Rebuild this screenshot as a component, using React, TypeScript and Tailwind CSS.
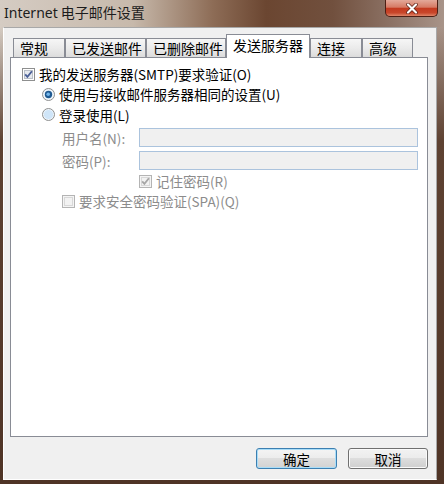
import React from 'react';

function CheckBox({ checked, disabled }: { checked?: boolean; disabled?: boolean }) {
  return (
    <svg width="13" height="13" viewBox="0 0 13 13" className="shrink-0">
      <rect x="0.5" y="0.5" width="12" height="12" fill={disabled ? '#f4f4f4' : '#ffffff'} stroke={disabled ? '#b4b4b4' : '#8e8f8f'} />
      <rect x="2.5" y="2.5" width="8" height="8" fill={disabled ? '#f2f2f2' : '#e6e9ee'} stroke={disabled ? '#d8d8d8' : '#b9bfc7'} />
      {checked && (
        <path d="M3.2 6.3 L5.4 8.9 L9.9 3.2" fill="none" stroke={disabled ? '#a6a6a6' : '#4a5f97'} strokeWidth="1.8" />
      )}
    </svg>
  );
}

function Radio({ checked }: { checked?: boolean }) {
  return (
    <svg width="13" height="13" viewBox="0 0 13 13" className="shrink-0">
      <circle cx="6.5" cy="6.5" r="6" fill="#eef5fb" stroke="#8e8f8f" />
      {checked ? (
        <>
          <circle cx="6.5" cy="6.5" r="3.7" fill="#1f5a92" />
          <circle cx="6.2" cy="6.2" r="1.8" fill="#74b6ea" />
        </>
      ) : (
        <circle cx="6.5" cy="6.5" r="4.6" fill="#cfe5f8" />
      )}
    </svg>
  );
}

const tabs = [
  { label: '常规', w: 'w-[52px]' },
  { label: '已发送邮件', w: 'w-[81px]' },
  { label: '已删除邮件', w: 'w-[80px]' },
  { label: '发送服务器', w: 'w-[84px]', active: true },
  { label: '连接', w: 'w-[52px]' },
  { label: '高级', w: 'w-[51px]' },
];

export default function App() {
  return (
    <div className="w-[444px] h-[484px] flex flex-col overflow-hidden font-['Noto_Sans_CJK_SC',sans-serif] text-[13.5px] text-black">
      {/* Title bar */}
      <div className="h-[27px] flex items-start justify-between bg-[linear-gradient(90deg,#d5ccc3_0%,#c7b9ab_30%,#8d6c56_48%,#6b4631_60%,#71503e_75%,#8c7265_88%,#a89489_100%)]">
        <span className="pl-[4px] pt-[3px] text-[14px] leading-[18px] text-[#1c1c1c]">
          <span className="font-['Noto_Sans',sans-serif]">Internet</span> 电子邮件设置
        </span>
        <div className="mr-[6px] w-[53px] h-[17px] flex items-center justify-center rounded-b-[5px] border border-t-0 border-[#4d1f14] bg-[linear-gradient(180deg,#e3a999_0%,#d67a64_45%,#c33a1f_52%,#c8462a_80%,#e08568_100%)]">
          <svg width="14" height="11" viewBox="0 0 14 11">
            <path d="M3 1.5 L11 9.5 M11 1.5 L3 9.5" stroke="#5a1e12" strokeWidth="3.6" strokeLinecap="round" />
            <path d="M3 1.5 L11 9.5 M11 1.5 L3 9.5" stroke="#ffffff" strokeWidth="2.2" strokeLinecap="round" />
          </svg>
        </div>
      </div>

      {/* Frame + client area */}
      <div className="flex-1 flex pl-[3px] pr-[7px] pb-[4px] bg-[linear-gradient(180deg,rgba(0,0,0,0)_0%,#5e4232_25%,#4f3426_100%),linear-gradient(90deg,#d5ccc3_0%,#8d6c56_50%,#a89489_100%)]">
        <div className="flex-1 flex flex-col bg-[#f0f0f0] border border-t-[#a8a8a8] border-r-[#a8a8a8] border-l-white border-b-white pl-[6px] pr-[8px] pt-[6px]">
          {/* Tabs */}
          <div className="h-[23px] flex items-end pl-[3px]">
            {tabs.map((t) =>
              t.active ? (
                <div
                  key={t.label}
                  className={`${t.w} h-[24px] -mb-px relative z-10 bg-white border border-b-0 border-[#898c95] pl-[6px] pt-[1px] leading-[18px] text-[14px]`}
                >
                  {t.label}
                </div>
              ) : (
                <div
                  key={t.label}
                  className={`${t.w} h-[19px] border border-b-0 border-[#898c95] bg-[linear-gradient(180deg,#f6f6f6_0%,#ebebeb_50%,#dcdcdc_100%)] pl-[6px] leading-[18px] text-[14px]`}
                >
                  {t.label}
                </div>
              )
            )}
          </div>

          {/* Panel */}
          <div className="h-[380px] bg-white border border-[#898c95] pt-[6px] pl-[11px] flex flex-col leading-[16px]">
            <div className="h-[20px] flex items-center gap-[4px]">
              <CheckBox checked />
              <span>我的发送服务器(SMTP)要求验证(O)</span>
            </div>
            <div className="h-[20px] flex items-center gap-[4px] pl-[20px]">
              <Radio checked />
              <span>使用与接收邮件服务器相同的设置(U)</span>
            </div>
            <div className="h-[21px] flex items-center gap-[4px] pl-[20px]">
              <Radio />
              <span>登录使用(L)</span>
            </div>
            <div className="mt-[3px] h-[19px] flex items-center pl-[40px]">
              <span className="w-[77px] text-[#8c8c8c]">用户名(N):</span>
              <div className="w-[279px] h-[19px] bg-[#f0f0f0] border border-[#abc3dd]" />
            </div>
            <div className="mt-[4px] h-[19px] flex items-center pl-[40px]">
              <span className="w-[77px] text-[#8c8c8c]">密码(P):</span>
              <div className="w-[279px] h-[19px] bg-[#f0f0f0] border border-[#abc3dd]" />
            </div>
            <div className="mt-[1px] h-[20px] flex items-center gap-[4px] pl-[117px]">
              <CheckBox checked disabled />
              <span className="text-[#8c8c8c]">记住密码(R)</span>
            </div>
            <div className="h-[20px] flex items-center gap-[4px] pl-[40px]">
              <CheckBox disabled />
              <span className="text-[#8c8c8c]">要求安全密码验证(SPA)(Q)</span>
            </div>
          </div>

          {/* Buttons */}
          <div className="mt-[11px] flex justify-end gap-[11px]">
            <button className="w-[81px] h-[21px] rounded-[3px] border border-[#3c7fb1] shadow-[inset_0_0_0_1px_#a9ddf8] bg-[linear-gradient(180deg,#f4f4f4_0%,#ececec_49%,#dedede_50%,#d2d2d2_100%)] text-[13.5px] leading-[18px]">
              确定
            </button>
            <button className="w-[80px] h-[21px] rounded-[3px] border border-[#707070] shadow-[inset_0_0_0_1px_#fafafa] bg-[linear-gradient(180deg,#f2f2f2_0%,#ebebeb_49%,#dddddd_50%,#cfcfcf_100%)] text-[13.5px] leading-[18px]">
              取消
            </button>
          </div>
        </div>
      </div>
    </div>
  );
}
